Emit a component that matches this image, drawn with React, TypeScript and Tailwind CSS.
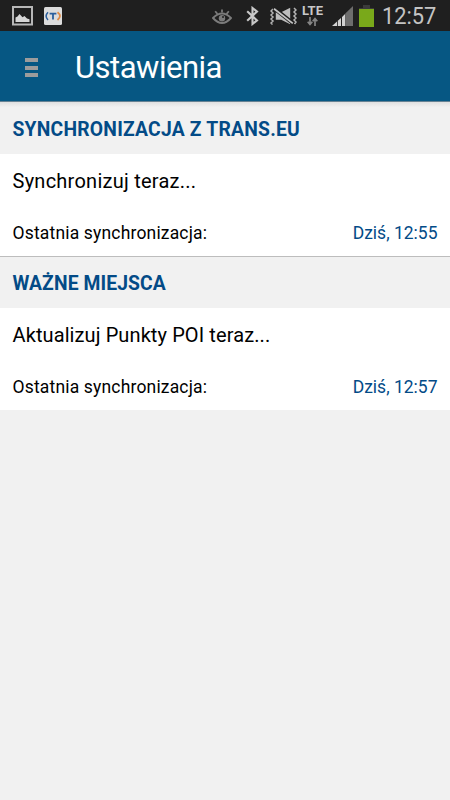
import type { ReactNode } from 'react';

interface SettingsSection {
  title: string;
  action: string;
  lastSync: string;
  titleClass: string;
  actionClass: string;
}

const sections: SettingsSection[] = [
  {
    title: 'SYNCHRONIZACJA Z TRANS.EU',
    action: 'Synchronizuj teraz...',
    lastSync: 'Dziś, 12:55',
    titleClass: 'tracking-[0.22px]',
    actionClass: 'tracking-[0.25px]'
  },
  {
    title: 'WAŻNE MIEJSCA',
    action: 'Aktualizuj Punkty POI teraz...',
    lastSync: 'Dziś, 12:57',
    titleClass: 'tracking-[0.1px]',
    actionClass: 'tracking-[0.1px]'
  }
];

const PictureIcon = () => (
  <svg className="h-[20px] w-[21px]" viewBox="0 0 21 20">
    <rect x="1" y="1" width="19" height="17.5" fill="#1f1f1f" stroke="#b8b8b8" strokeWidth="2" />
    <path d="M3.5 16V11.5l2-1 2-2.5 3 3.2 2-1.2 2.5 2.5 2.5.8V16z" fill="#d6d6d6" />
  </svg>
);

const TransIcon = () => (
  <svg className="h-[18px] w-[18px]" viewBox="0 0 18 18">
    <rect width="18" height="18" rx="1.5" fill="#dcdcdc" />
    <path d="M4 5.2Q0.2 9 4 13" fill="none" stroke="#2b5f9c" strokeWidth="1.5" />
    <path d="M13.5 5.2Q18.5 9 13.5 13" fill="none" stroke="#df8b45" strokeWidth="1.8" />
    <path d="M5.6 6.6h6.8M9 6.6v6" fill="none" stroke="#2b5f9c" strokeWidth="1.8" />
  </svg>
);

const EyeIcon = () => (
  <svg className="h-[17px] w-[20px]" viewBox="0 0 20 17" fill="none" stroke="#7b7b7b">
    <path d="M1 10Q10 1 19 10Q10 20 1 10Z" strokeWidth="1.9" />
    <circle cx="10" cy="10.2" r="3.2" fill="#7b7b7b" stroke="none" />
    <path d="M10 4.5V1.5M5.5 6 3.2 3.2M14.5 6 16.8 3.2" strokeWidth="1.8" />
    <circle cx="11" cy="9" r="1" fill="#1f1f1f" stroke="none" />
  </svg>
);

const BluetoothIcon = () => (
  <svg className="h-[20px] w-[13px]" viewBox="0 0 13 20" fill="none" stroke="#c8c8c8">
    <path d="M1.2 5.2 11 14.4 6.5 18V2L11 5.6 1.2 14.8" strokeWidth="2.1" />
  </svg>
);

const VibrateIcon = () => (
  <svg className="h-[18px] w-[27px]" viewBox="0 0 27 18" fill="none">
    <path d="M3 2 1 4l2 2-2 2 2 2-2 2 2 2-2 2 1.5 1.5M24 1l2 2-2 2 2 2-2 2 2 2-2 2 2 2-1.5 2" stroke="#b4b4b4" strokeWidth="1.5" />
    <path d="M5.8 5.3h5.4L20.2.8v16.4l-9-4.5H5.8z" fill="#bdbdbd" />
    <path d="M4 1.2 23 16.2" stroke="#1f1f1f" strokeWidth="4" />
    <path d="M4 1.7 22.8 16.4" stroke="#c4c4c4" strokeWidth="1.8" />
  </svg>
);

const DataArrows = () => (
  <svg className="h-[9px] w-[11px]" viewBox="0 0 11 9" fill="none" stroke="#858585" strokeWidth="1.7">
    <path d="M3 0v7M.7 4.8 3 7.4l2.3-2.6M8 9V2M5.7 4.2 8 1.6l2.3 2.6" />
  </svg>
);

const SignalIcon = () => (
  <svg className="h-[20px] w-[21px]" viewBox="0 0 21 20">
    <path d="M0 20 5 15.5V20z" fill="#d2d2d2" />
    <path d="M5.8 20v-5.2L9 12v8zM10 20v-9l3.3-3.2V20z" fill="#d2d2d2" />
    <path d="M13.3 20V7.5L21 0v20z" fill="#6d6d6d" />
  </svg>
);

const BatteryIcon = () => (
  <svg className="h-[22px] w-[15px]" viewBox="0 0 15 22">
    <path d="M4 0h7v3h4v2H0V3h4z" fill="#3b3b3b" />
    <path d="M0 4h15v18H0z" fill="#79a91a" />
  </svg>
);

const StatusItem = ({ className, children }: { className: string; children: ReactNode }) => (
  <div className={`shrink-0 ${className}`}>{children}</div>
);

const StatusBar = () => (
  <div className="flex h-[31px] items-start bg-[#1f1f1f]">
    <StatusItem className="ml-[12px] mt-[6px]"><PictureIcon /></StatusItem>
    <StatusItem className="ml-[11px] mt-[7px]"><TransIcon /></StatusItem>
    <StatusItem className="ml-[150px] mt-[8px]"><EyeIcon /></StatusItem>
    <StatusItem className="ml-[14px] mt-[6px]"><BluetoothIcon /></StatusItem>
    <StatusItem className="ml-[11px] mt-[7px]"><VibrateIcon /></StatusItem>
    <StatusItem className="ml-[4px] mt-[4px] flex w-[23px] flex-col items-center">
      <span className="text-[13px] leading-[13px] font-bold text-[#c8c8c8]">LTE</span>
      <DataArrows />
    </StatusItem>
    <StatusItem className="ml-[8px] mt-[6px]"><SignalIcon /></StatusItem>
    <StatusItem className="ml-[6px] mt-[5px]"><BatteryIcon /></StatusItem>
    <span className="ml-[8px] origin-left scale-x-[0.91] text-[24px] leading-[32px] whitespace-nowrap text-[#c4c4c4]">
      12:57
    </span>
  </div>
);

const Header = () => (
  <header className="flex h-[71px] items-center border-b border-[#668293] bg-[#065783] pt-[3px]">
    <div className="ml-[25px] flex w-[13px] flex-col gap-[3.5px]">
      <span className="h-[4px] bg-[#9c9c9c]" />
      <span className="h-[4px] bg-[#9c9c9c]" />
      <span className="h-[4px] bg-[#9c9c9c]" />
    </div>
    <h1 className="ml-[37px] text-[31px] leading-[41px] tracking-[-0.5px] text-white">Ustawienia</h1>
  </header>
);

export default function App() {
  return (
    <div className="h-[800px] w-[450px] overflow-hidden bg-[#f1f1f1] font-['Roboto',sans-serif]">
      <StatusBar />
      <Header />

      {/* Settings groups */}
      <main>
        {sections.map((section, index) => (
          <section key={section.title} className={index > 0 ? 'border-t border-[#bdbdbd]' : ''}>
            <div
              className={
                index > 0
                  ? 'flex h-[51px] items-center bg-[#f1f1f1] px-[12.5px] pt-[3px]'
                  : 'flex h-[52px] items-center bg-linear-to-b from-[#e0e0e0] to-[#f1f1f1] to-10% px-[12.5px] pt-[4px]'
              }
            >
              <h2 className={`text-[19.3px] font-bold text-[#034b87] ${section.titleClass}`}>{section.title}</h2>
            </div>
            <div className="bg-white px-[12.5px] text-black">
              <div className={`flex h-[54px] items-center text-[20px] ${section.actionClass}`}>{section.action}</div>
              <div className="flex h-[48px] items-center justify-between pt-[2px] text-[17.5px]">
                <span className="tracking-[0.17px]">Ostatnia synchronizacja:</span>
                <span className="text-[#034b87]">{section.lastSync}</span>
              </div>
            </div>
          </section>
        ))}
      </main>
    </div>
  );
}
